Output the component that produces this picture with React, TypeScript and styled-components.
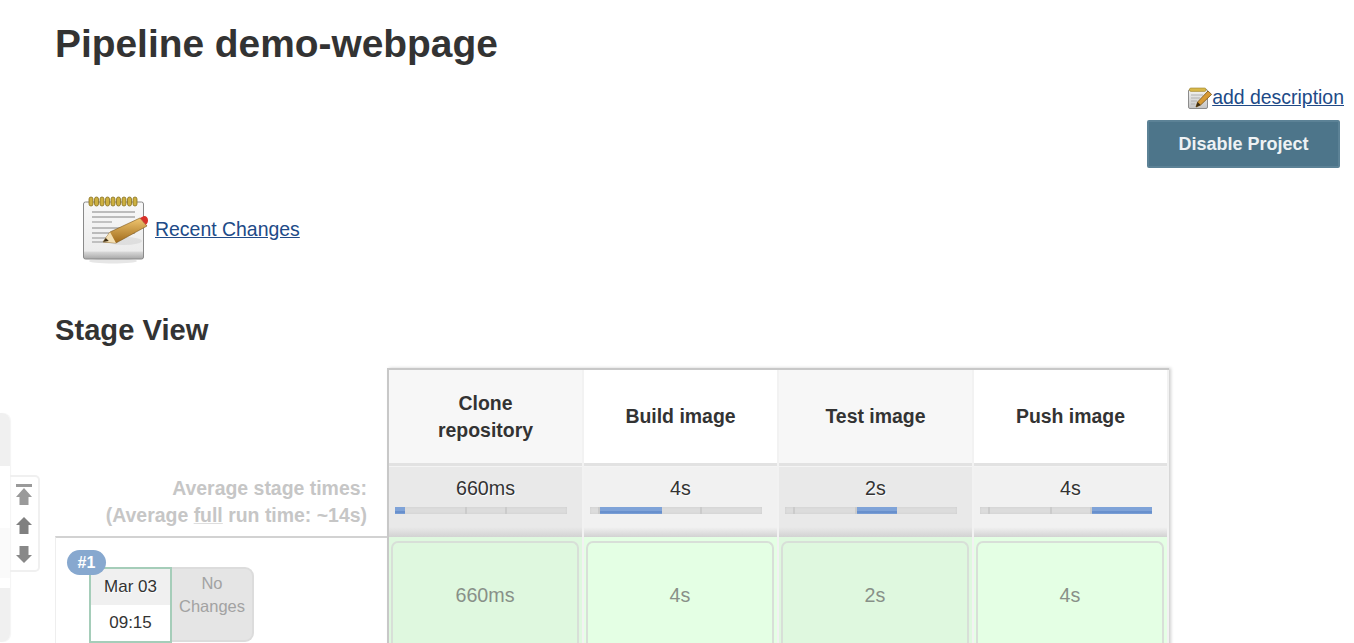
import styled, { createGlobalStyle } from "styled-components";

const GlobalStyle = createGlobalStyle`
  html, body {
    margin: 0;
    padding: 0;
    height: 643px;
    overflow: hidden;
    background: #fff;
    font-family: "Liberation Sans", Arial, sans-serif;
    color: #333;
  }
`;

const Page = styled.div`
  position: relative;
  height: 643px;
  overflow: hidden;
  padding: 22px 10px 0 55px;
  box-sizing: border-box;
`;

const Title = styled.h1`
  margin: 0;
  font-size: 38.88px;
  line-height: 44px;
  font-weight: 700;
  color: #333;
`;

const Actions = styled.div`
  margin-top: 20px;
  display: flex;
  flex-direction: column;
  align-items: flex-end;
`;

const DescriptionRow = styled.div`
  display: flex;
  align-items: flex-start;
  height: 34px;
`;

const PageLink = styled.a`
  display: block;
  font-size: 19.44px;
  line-height: 23px;
  color: #204a87;
  text-decoration: underline;
`;

const RecentLink = styled(PageLink)`
  margin-bottom: 2px;
`;

const DisableButton = styled.button`
  width: 193px;
  height: 48px;
  margin-right: 4px;
  padding: 0;
  background: #4d758a;
  border: 2px solid #5c8296;
  border-radius: 2px;
  color: #eef2f4;
  font-family: inherit;
  font-size: 18px;
  font-weight: 700;
`;

const RecentChanges = styled.div`
  margin: 27px 0 0 25px;
  display: flex;
  align-items: center;
  gap: 5px;
  height: 70px;
`;

const SectionTitle = styled.h2`
  margin: 48px 0 0;
  font-size: 29.16px;
  line-height: 34px;
  font-weight: 700;
  color: #333;
`;

const StageView = styled.div`
  margin-top: 21px;
  display: flex;
  align-items: flex-start;
`;

const Summary = styled.div`
  width: 332px;
  flex: none;
`;

const AverageLabel = styled.div`
  height: 168px;
  box-sizing: border-box;
  padding: 0 20px 7px 0;
  display: flex;
  flex-direction: column;
  justify-content: flex-end;
  text-align: right;
  font-size: 19.44px;
  line-height: 27px;
  font-weight: 700;
  color: #c6c6c6;
`;

const FullWord = styled.span`
  text-decoration: underline;
  text-decoration-color: #dedede;
`;

const RunRow = styled.div`
  position: relative;
  height: 120px;
  box-sizing: border-box;
  border-top: 2px solid #d2d2d2;
  border-left: 1px solid #eee;
  padding: 29px 0 0 33px;
  display: flex;
  align-items: flex-start;
`;

const RunBadge = styled.div`
  position: absolute;
  top: 12px;
  left: 11px;
  width: 39px;
  height: 25px;
  border-radius: 13px;
  background: #87a8cf;
  color: #fff;
  font-size: 16px;
  font-weight: 700;
  line-height: 25px;
  text-align: center;
  z-index: 1;
`;

const DateBox = styled.div`
  width: 83px;
  height: 76px;
  box-sizing: border-box;
  border: 2px solid #a5cdb9;
  display: flex;
  flex-direction: column;
  font-size: 17px;
  color: #333;
`;

const DatePart = styled.div<{ $shaded?: boolean }>`
  flex: 1;
  display: flex;
  align-items: center;
  justify-content: center;
  background: ${(p) => (p.$shaded ? "#f0f0f0" : "#fff")};
  text-shadow: 1px 1px 1px #fff;
`;

const ChangesBox = styled.div`
  width: 82px;
  height: 75px;
  box-sizing: border-box;
  padding-top: 3px;
  background: #e5e5e5;
  border: 2px solid #dcdcdc;
  border-left: none;
  border-radius: 0 9px 9px 0;
  text-align: center;
  font-size: 16.5px;
  line-height: 23px;
  color: #a2a2a2;
`;

const StageTable = styled.div`
  width: 780px;
  flex: none;
  border-top: 2px solid #c8c8c8;
  border-left: 2px solid #c8c8c8;
  box-shadow: 2px 0 3px #d0d0d0;
  background: #f2f2f2;
  display: grid;
  grid-template-columns: repeat(4, 193px);
  column-gap: 2px;
`;

const StageHeader = styled.div<{ $odd: boolean }>`
  height: 93px;
  padding: 0 30px;
  display: flex;
  align-items: center;
  justify-content: center;
  text-align: center;
  font-size: 19.44px;
  line-height: 27px;
  font-weight: 700;
  color: #333;
  background: ${(p) => (p.$odd ? "#f7f7f7" : "#fff")};
  border-bottom: 3px solid #e2e2e2;
`;

const AverageCell = styled.div<{ $odd: boolean }>`
  height: 71px;
  box-sizing: border-box;
  border-top: 1px solid #f4f4f4;
  padding: 8px 6px 0;
  background: linear-gradient(to bottom, transparent 86%, #d2d2d2 100%),
    ${(p) => (p.$odd ? "#e9e9e9" : "#f1f1f1")};
`;

const AverageValue = styled.div`
  font-size: 19.7px;
  line-height: 26px;
  text-align: center;
  color: #333;
  text-shadow: 1px 1px 1px #fff;
`;

const Track = styled.div`
  margin-top: 6px;
  width: 172px;
  height: 7px;
  display: flex;
  background: #dcdcdc;
  box-shadow: inset 0 0 2px #c8c8c8;
`;

const Segment = styled.div<{ $width: number; $active: boolean }>`
  width: ${(p) => p.$width}px;
  height: 100%;
  box-sizing: border-box;
  background: ${(p) => (p.$active ? "linear-gradient(to bottom, #7fa3d8 50%, #5f88c8 70%, #7fa3d8 100%)" : "transparent")};
  border-right: ${(p) => (p.$active ? "none" : "2px solid #cbcbcb")};
  &:last-child {
    border-right: none;
  }
`;

const StageCell = styled.div<{ $odd: boolean }>`
  height: 120px;
  padding: 4px 3px 0 2px;
  background: ${(p) => (p.$odd ? "#dff8df" : "#e4ffe4")};
`;

const StageBox = styled.div<{ $odd: boolean }>`
  height: 108px;
  box-sizing: border-box;
  border: 2px solid #d8dfd8;
  border-bottom: none;
  border-radius: 7px 7px 0 0;
  padding-top: 39px;
  background: ${(p) => (p.$odd ? "#dff8df" : "#e4ffe4")};
  text-align: center;
  font-size: 19.7px;
  line-height: 26px;
  color: #889088;
`;

const SideRail = styled.div`
  position: absolute;
  left: 0;
  top: 413px;
  width: 10px;
  height: 229px;
  border-radius: 0 8px 8px 0;
  overflow: hidden;
  display: flex;
  flex-direction: column;
  box-shadow: 1px 0 1px #f4f4f4;
`;

const RailPart = styled.div<{ $size: number; $color: string }>`
  height: ${(p) => p.$size}px;
  flex: none;
  background: ${(p) => p.$color};
`;

const ScrollButtons = styled.div`
  position: absolute;
  left: 10px;
  top: 475px;
  width: 30px;
  height: 97px;
  box-sizing: border-box;
  border: 2px solid #f0f0f0;
  border-left: none;
  border-radius: 0 5px 5px 0;
  display: flex;
  flex-direction: column;
  align-items: center;
  padding-top: 7px;
  gap: 12px;
`;

const ArrowSvg = styled.svg`
  display: block;
  flex: none;
  filter: blur(0.5px);
`;

function ScrollTopIcon() {
  return (
    <ArrowSvg width="18" height="21" viewBox="0 0 18 21">
      <rect x="1" y="0" width="16" height="3" fill="#9a9a9a" />
      <path d="M9 4l8 9h-3.5v8h-9v-8H1z" fill="#9a9a9a" />
    </ArrowSvg>
  );
}

function ScrollUpIcon() {
  return (
    <ArrowSvg width="18" height="17" viewBox="0 0 18 17">
      <path d="M9 0l8 8h-3.5v9h-9V8H1z" fill="#808080" />
    </ArrowSvg>
  );
}

function ScrollDownIcon() {
  return (
    <ArrowSvg width="18" height="17" viewBox="0 0 18 17">
      <path d="M4.5 0h9v9H17l-8 8-8-8h3.5z" fill="#888" />
    </ArrowSvg>
  );
}

function NotepadIcon() {
  const rings = Array.from({ length: 9 }, (_, i) => 11 + i * 5.5);
  return (
    <svg width="70" height="70" viewBox="0 0 70 70" style={{ flex: "none", display: "block" }}>
      <defs>
        <linearGradient id="sheet" x1="0" y1="0" x2="0" y2="1">
          <stop offset="0" stopColor="#f8f8f8" />
          <stop offset="0.86" stopColor="#ececec" />
          <stop offset="0.88" stopColor="#d6d6d6" />
          <stop offset="1" stopColor="#a8a8a8" />
        </linearGradient>
        <linearGradient id="pencil" x1="0" y1="0" x2="0" y2="1">
          <stop offset="0" stopColor="#f0c670" />
          <stop offset="1" stopColor="#a06a1a" />
        </linearGradient>
      </defs>
      <ellipse cx="33" cy="66" rx="24" ry="2.5" fill="#e6e6e6" />
      <rect x="3.5" y="7" width="60" height="57" rx="2" fill="url(#sheet)" stroke="#8a8a8a" />
      {rings.map((x) => (
        <rect key={x} x={x - 2} y="2" width="4" height="9" rx="2" fill="#cdb040" stroke="#86701f" strokeWidth="0.8" />
      ))}
      <g stroke="#a8a8a8" strokeWidth="1.3">
        <line x1="12" y1="17" x2="55" y2="17" />
        <line x1="12" y1="22" x2="55" y2="22" />
        <line x1="12" y1="27" x2="32" y2="27" />
        <line x1="12" y1="33" x2="55" y2="33" />
        <line x1="12" y1="38" x2="55" y2="38" />
        <line x1="12" y1="43" x2="44" y2="43" />
        <line x1="12" y1="47" x2="30" y2="47" />
      </g>
      <ellipse cx="44" cy="46" rx="18" ry="4" fill="#d4d4d4" opacity="0.6" />
      <path d="M23 47l7-10 30-14 7 8-31 17z" fill="url(#pencil)" stroke="#7a5417" strokeWidth="0.6" />
      <path d="M23 47l7-10 6 11z" fill="#f3dfb4" />
      <path d="M23 47l2.8-4 3 3z" fill="#3c2c12" />
      <path d="M60 23l3-1.6c2.6-1.2 5 1.2 5 3.8 0 2-.8 3.6-2.4 4.6L67 31z" fill="#d8312a" />
    </svg>
  );
}

function DescriptionIcon() {
  return (
    <svg width="24" height="24" viewBox="0 0 24 24" style={{ flex: "none", display: "block" }}>
      <defs>
        <linearGradient id="smallSheet" x1="0" y1="0" x2="0" y2="1">
          <stop offset="0" stopColor="#f4f4f4" />
          <stop offset="1" stopColor="#c4c4c4" />
        </linearGradient>
      </defs>
      <rect x="0.5" y="3.5" width="19" height="19" rx="1.5" fill="url(#smallSheet)" stroke="#8c8c8c" />
      <rect x="1.5" y="2" width="16.5" height="3.4" rx="1.4" fill="#d8b84a" stroke="#9a8228" strokeWidth="0.6" />
      <g stroke="#b0b0b0" strokeWidth="1">
        <line x1="3" y1="9" x2="15" y2="9" />
        <line x1="3" y1="12" x2="12" y2="12" />
        <line x1="3" y1="15" x2="9" y2="15" />
        <line x1="3" y1="18" x2="7" y2="18" />
      </g>
      <path d="M8 21l1.6-5L20 5l3.6 3.4L12.6 19z" fill="#d79a35" stroke="#7a5417" strokeWidth="0.8" />
      <path d="M8 21l1.6-5 3 3z" fill="#3c2c12" />
    </svg>
  );
}

const stages = [
  { name: "Clone repository", time: "660ms", active: 0 },
  { name: "Build image", time: "4s", active: 1 },
  { name: "Test image", time: "2s", active: 2 },
  { name: "Push image", time: "4s", active: 3 },
];

// share of the run each stage took, in px of the 172px bar
const segments = [10, 62, 40, 60];

export default function App() {
  return (
    <>
      <GlobalStyle />
      <Page>
        <Title>Pipeline demo-webpage</Title>
        <Actions>
          <DescriptionRow>
            <DescriptionIcon />
            <PageLink href="#">add description</PageLink>
          </DescriptionRow>
          <DisableButton>Disable Project</DisableButton>
        </Actions>
        <RecentChanges>
          <NotepadIcon />
          <RecentLink href="#">Recent Changes</RecentLink>
        </RecentChanges>
        <SectionTitle>Stage View</SectionTitle>
        <StageView>
          <Summary>
            <AverageLabel>
              <div>Average stage times:</div>
              <div>
                (Average <FullWord>full</FullWord> run time: ~14s)
              </div>
            </AverageLabel>
            <RunRow>
              <RunBadge>#1</RunBadge>
              <DateBox>
                <DatePart $shaded>Mar 03</DatePart>
                <DatePart>09:15</DatePart>
              </DateBox>
              <ChangesBox>
                No
                <br />
                Changes
              </ChangesBox>
            </RunRow>
          </Summary>
          <StageTable>
            {stages.map((s, i) => (
              <StageHeader key={s.name} $odd={i % 2 === 0}>
                {s.name}
              </StageHeader>
            ))}
            {stages.map((s, i) => (
              <AverageCell key={s.name} $odd={i % 2 === 0}>
                <AverageValue>{s.time}</AverageValue>
                <Track>
                  {segments.map((w, j) => (
                    <Segment key={j} $width={w} $active={j === s.active} />
                  ))}
                </Track>
              </AverageCell>
            ))}
            {stages.map((s, i) => (
              <StageCell key={s.name} $odd={i % 2 === 0}>
                <StageBox $odd={i % 2 === 0}>{s.time}</StageBox>
              </StageCell>
            ))}
          </StageTable>
        </StageView>
        <SideRail>
          <RailPart $size={53} $color="#f0f0f0" />
          <RailPart $size={62} $color="#ffffff" />
          <RailPart $size={50} $color="#fafafa" />
          <RailPart $size={10} $color="#ffffff" />
          <RailPart $size={54} $color="#f0f0f0" />
        </SideRail>
        <ScrollButtons>
          <ScrollTopIcon />
          <ScrollUpIcon />
          <ScrollDownIcon />
        </ScrollButtons>
      </Page>
    </>
  );
}
